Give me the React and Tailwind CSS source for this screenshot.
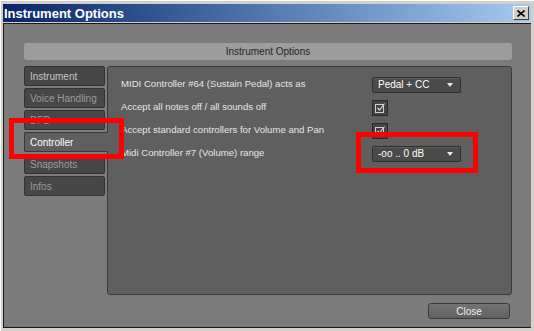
import React from "react";

const font = { fontFamily: '"Liberation Sans", Arial, sans-serif' };

function Tab({ label, active, dim }) {
  if (active) {
    return (
      <div className="h-[20px] -mr-[3px] pl-[5px] flex items-center bg-[#5f5f5f] border border-r-0 border-[#3a3a3a] rounded-l-[2px] text-white text-[10px] relative z-10">
        {label}
      </div>
    );
  }
  return (
    <div
      className={
        "h-[20px] pl-[5px] flex items-center bg-[#474747] border border-[#333] rounded-[2px] text-[10px] " +
        (dim ? "text-[#9a9a9a]" : "text-[#c4c4c4]")
      }
    >
      {label}
    </div>
  );
}

function Dropdown({ value }) {
  return (
    <div className="w-[89px] h-[16px] flex items-center justify-between px-[5px] bg-[#4a4a4a] border border-[#2e2e2e] rounded-[2px] shadow-[inset_0_1px_0_#5c5c5c] text-white text-[10px]">
      <span>{value}</span>
      <svg width="6" height="4" viewBox="0 0 6 4" className="mr-[2px]">
        <path d="M0 0 H6 L3 4 Z" fill="#e8e8e8" />
      </svg>
    </div>
  );
}

function Check() {
  return (
    <div className="w-[16px] h-[16px] flex items-center justify-center bg-[#444] border border-[#2a2a2a]">
      <svg width="12" height="12" viewBox="0 0 12 12">
        <rect x="1.5" y="2.5" width="8" height="8" fill="none" stroke="#cfcfcf" />
        <path d="M3.5 6 L5.5 8 L10.5 1.5" fill="none" stroke="#cfcfcf" strokeWidth="1.2" />
      </svg>
    </div>
  );
}

function Row({ label, children }) {
  return (
    <div className="h-[23px] flex items-center">
      <div className="w-[251px] text-[9.6px] text-[#e6e6e6]">{label}</div>
      {children}
    </div>
  );
}

export default function App() {
  return (
    <div
      className="relative w-[534px] h-[331px] bg-[#d4d0c8] flex flex-col pt-[3px] pl-[2px] pr-[3px] pb-[3px] border-l border-t border-white"
      style={font}
    >
      {/* title bar */}
      <div className="h-[18px] flex items-center justify-between pl-[1px] pr-[2px] bg-gradient-to-r from-[#0a246a] via-[#5478b0] to-[#a6caf0]">
        <span className="text-white font-bold text-[13px] leading-none">Instrument Options</span>
        <div className="w-[16px] h-[14px] bg-[#d4d0c8] border border-t-white border-l-white border-r-[#404040] border-b-[#404040] flex items-center justify-center">
          <svg width="8" height="7" viewBox="0 0 8 7">
            <path d="M0.5 0.5 L7.5 6.5 M7.5 0.5 L0.5 6.5" stroke="#000" strokeWidth="1.6" />
          </svg>
        </div>
      </div>

      {/* content */}
      <div className="mt-[1px] flex-1 flex flex-col bg-[#7b7b7b] border-t border-b border-l border-[#1a1a1a] pt-[19px] pl-[20px] pr-[19px]">
        <div className="h-[17px] flex items-center justify-center bg-[#9c9c9c] rounded-[3px] text-[10px] text-[#262626]">
          Instrument Options
        </div>

        <div className="mt-[6px] flex gap-[2px]">
          <div className="w-[81px] flex flex-col gap-[2px]">
            <Tab label="Instrument" />
            <Tab label="Voice Handling" dim />
            <Tab label="DFD" dim />
            <Tab label="Controller" active />
            <Tab label="Snapshots" dim />
            <Tab label="Infos" dim />
          </div>
          <div className="flex-1 h-[229px] bg-[#5f5f5f] border border-[#3a3a3a] rounded-[3px] pl-[13px] pt-[6px]">
            <Row label="MIDI Controller #64 (Sustain Pedal) acts as">
              <Dropdown value="Pedal + CC" />
            </Row>
            <Row label="Accept all notes off / all sounds off">
              <Check />
            </Row>
            <Row label="Accept standard controllers for Volume and Pan">
              <Check />
            </Row>
            <Row label="Midi Controller #7 (Volume) range">
              <Dropdown value="-oo .. 0 dB" />
            </Row>
          </div>
        </div>

        <div className="mt-[8px] flex justify-end pr-[2px]">
          <div className="w-[82px] h-[16px] flex items-center justify-center bg-gradient-to-b from-[#747474] to-[#606060] border border-[#3a3a3a] rounded-[3px] text-[10px] text-[#f0f0f0]">
            Close
          </div>
        </div>
      </div>

      {/* annotation boxes */}
      <div className="absolute left-[8px] top-[117px] w-[115px] h-[41px] border-[5px] border-[#ff0000]" />
      <div className="absolute left-[355px] top-[131px] w-[122px] h-[41px] border-[5px] border-[#ff0000]" />
    </div>
  );
}
